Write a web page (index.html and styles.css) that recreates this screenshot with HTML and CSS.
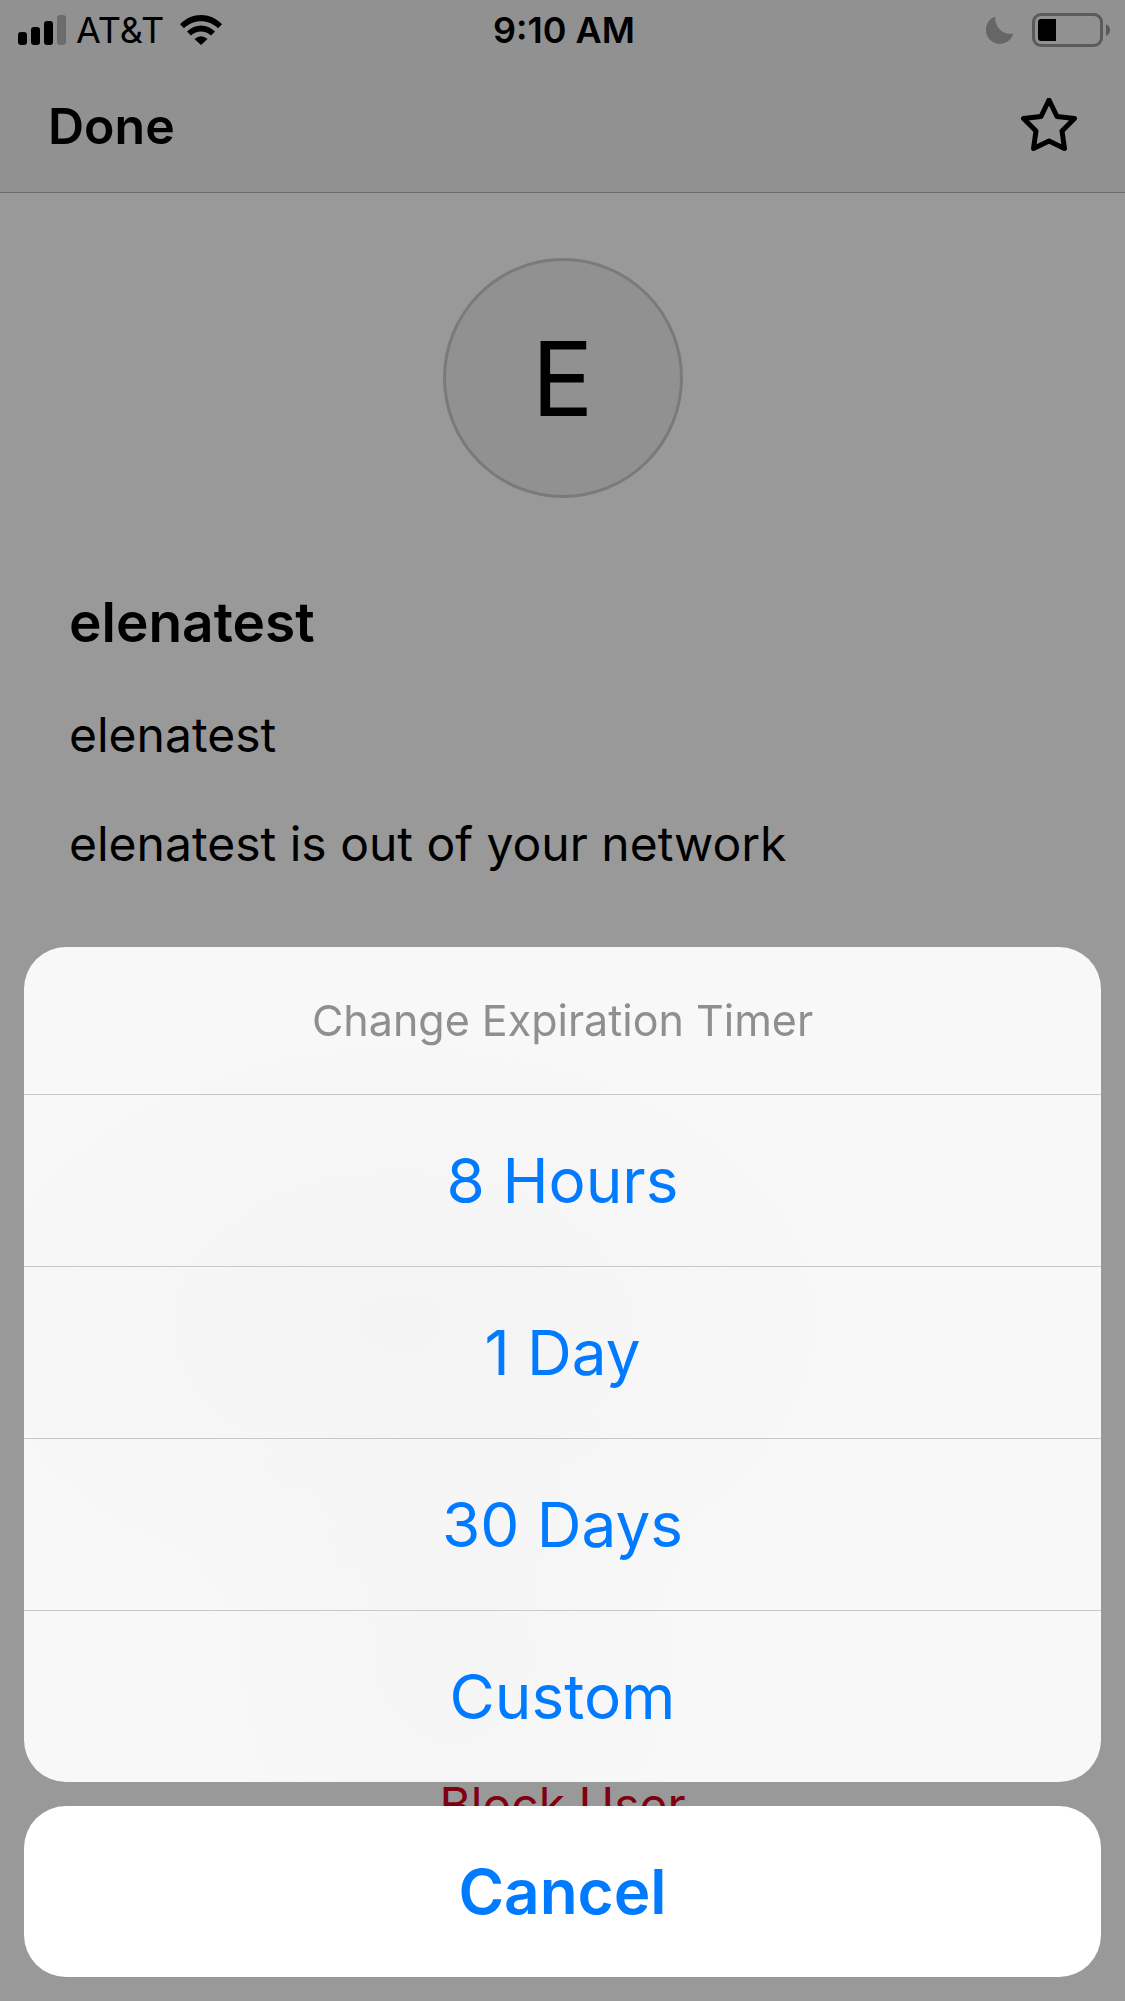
FILE: index.html
```html
<!DOCTYPE html>
<html lang="en">
<head>
  <meta charset="utf-8">
  <meta name="viewport" content="width=device-width, initial-scale=1">
  <title>elenatest</title>
  <link rel="stylesheet" href="styles.css">
</head>
<body>
  <div class="screen">
    <header class="top">
      <div class="status">
        <div class="status-left">
          <svg class="signal" width="48" height="30" viewBox="0 0 48 30" aria-hidden="true">
            <rect x="0" y="17" width="9" height="13" rx="3"/>
            <rect x="13" y="12" width="9" height="18" rx="3"/>
            <rect x="26" y="6" width="9" height="24" rx="3"/>
            <rect x="39" y="0" width="9" height="30" rx="3" fill="#b4b4b4"/>
          </svg>
          <span class="carrier">AT&amp;T</span>
          <svg class="wifi" width="42" height="30" viewBox="0 0 42 30" aria-hidden="true">
            <path d="M0 9.3C12-3 30-3 42 9.3L38 13.3C28.500 4 13.500 4 4 13.300Z"/>
            <path d="M7 16.500C15 8.500 27 8.500 35 16.500L31 20.500C25.500 15 16.500 15 11 20.500Z"/>
            <path d="M14.500 24Q21 18.500 27.500 24L21 30Z"/>
          </svg>
        </div>
        <time class="clock">9:10 AM</time>
        <div class="status-right">
          <svg width="28" height="28" viewBox="0 0 28 28" aria-hidden="true">
            <path d="M9.500 0.500A14 14 0 1 0 27.300 17.500A15 15 0 0 1 9.500 0.500Z" fill="#aaa"/>
          </svg>
          <svg width="78" height="34" viewBox="0 0 78 34" aria-hidden="true">
            <rect x="1.500" y="1.500" width="68" height="31" rx="7.500" fill="none" stroke="#969696" stroke-width="3"/>
            <path d="M9 6H24V28H9Q6 28 6 25V9Q6 6 9 6Z"/>
            <path d="M74 11Q78 13 78 17T74 23Z" fill="#969696"/>
          </svg>
        </div>
      </div>
      <nav class="nav">
        <button class="done" type="button">Done</button>
        <button class="favorite" type="button" aria-label="Favorite">
          <svg width="56" height="56" viewBox="0 1 56 56" aria-hidden="true">
            <path d="M28 3L36 19.500L53.500 21.500L41 34L43.500 51.500L28 44L12.500 51.500L15 34L2.500 21.500L20 19.500Z" fill="none" stroke="#000" stroke-width="5" stroke-linejoin="round"/>
          </svg>
        </button>
      </nav>
    </header>
    <main class="profile">
      <div class="avatar">E</div>
      <div class="details">
        <h1 class="name">elenatest</h1>
        <p class="line">elenatest</p>
        <p class="line">elenatest is out of your network</p>
      </div>
      <button class="block" type="button">Block User</button>
    </main>
  </div>
  <div class="overlay">
    <section class="sheet" role="dialog" aria-labelledby="sheet-title">
      <div class="options">
        <h2 class="sheet-title" id="sheet-title">Change Expiration Timer</h2>
        <button class="option" type="button">8 Hours</button>
        <button class="option" type="button">1 Day</button>
        <button class="option" type="button">30 Days</button>
        <button class="option" type="button">Custom</button>
      </div>
      <button class="cancel" type="button">Cancel</button>
    </section>
  </div>
</body>
</html>
```
FILE: styles.css
```css
* {
  box-sizing: border-box;
}

body,
h1,
h2,
p {
  margin: 0;
}

body {
  background: #fff;
  color: #000;
  font-family: Inter, "Liberation Sans", sans-serif;
}

button {
  margin: 0;
  padding: 0;
  border: 0;
  background: none;
  color: inherit;
  font: inherit;
  cursor: pointer;
}

svg {
  display: block;
}

.screen {
  display: flex;
  flex-direction: column;
  min-height: 100vh;
}

.top {
  background: #f2f2f2;
  border-bottom: 1px solid #b2b2b2;
}

.status {
  display: grid;
  grid-template-columns: 1fr auto 1fr;
  align-items: center;
  height: 60px;
  padding: 0 15px 0 18px;
  font-size: 36px;
  line-height: 60px;
}

.status-left,
.status-right {
  display: flex;
  align-items: center;
}

.status-left {
  gap: 10px;
}

.wifi {
  margin-left: 6px;
}

.status-right {
  justify-content: flex-end;
  gap: 18px;
}

.clock {
  font-weight: 600;
}

.nav {
  display: flex;
  align-items: center;
  justify-content: space-between;
  height: 132px;
  padding: 0 48px;
}

.done {
  font-size: 50px;
  font-weight: 600;
}

.profile {
  display: flex;
  flex: 1;
  flex-direction: column;
  padding: 65px 69px 164px;
}

.avatar {
  display: flex;
  align-items: center;
  justify-content: center;
  align-self: center;
  width: 240px;
  height: 240px;
  border: 3px solid #ccc;
  border-radius: 50%;
  background: #f2f2f2;
  font-size: 103px;
}

.details {
  display: flex;
  flex-direction: column;
  gap: 45px;
  padding-top: 88px;
}

.name {
  font-size: 55px;
  font-weight: 600;
  line-height: 72px;
}

.line {
  font-size: 48px;
  line-height: 64px;
}

.block {
  align-self: center;
  margin-top: auto;
  color: #d5001b;
  font-size: 48px;
  line-height: 64px;
}

.overlay {
  position: fixed;
  inset: 0;
  display: flex;
  align-items: flex-end;
  padding: 24px;
  background: rgba(0, 0, 0, 0.4);
}

.sheet {
  display: flex;
  flex: 1;
  flex-direction: column;
  gap: 24px;
}

.options {
  display: flex;
  flex-direction: column;
  overflow: hidden;
  border-radius: 42px;
  background:
    radial-gradient(ellipse at 35% 45%, #f4f4f4, rgba(244, 244, 244, 0) 50%),
    radial-gradient(ellipse at 40% 85%, #f5f5f5, rgba(245, 245, 245, 0) 30%),
    #f8f8f9;
}

.sheet-title {
  color: #8f8f8f;
  font-size: 43px;
  font-weight: 400;
  line-height: 147px;
  text-align: center;
}

.option {
  height: 172px;
  border-top: 1px solid #c8c8cc;
  color: #007aff;
  font-size: 62px;
}

.cancel {
  height: 171px;
  border-radius: 42px;
  background: #fff;
  color: #007aff;
  font-size: 62px;
  font-weight: 600;
}
```
